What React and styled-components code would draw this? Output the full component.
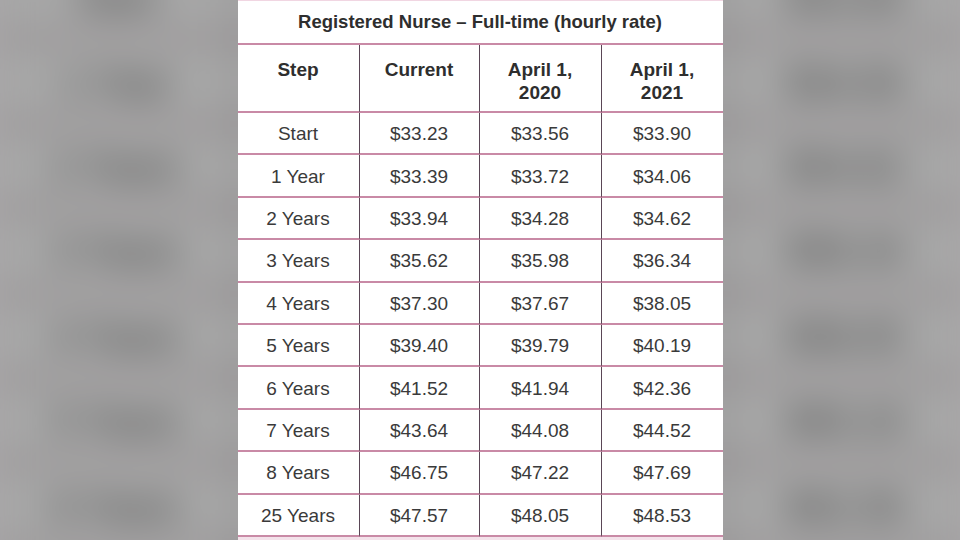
import styled, { createGlobalStyle } from 'styled-components';

const GlobalStyle = createGlobalStyle`
  html, body {
    margin: 0;
    padding: 0;
    background: #a9a6a8;
  }
  body {
    font-family: "Liberation Sans", Arial, sans-serif;
  }
`;

const Stage = styled.div`
  width: 960px;
  height: 540px;
  overflow: hidden;
  display: grid;
  place-items: start center;
  background: #a9a6a8;
`;

const Layer = styled.div`
  grid-area: 1 / 1;
`;

// blurred, enlarged copy of the table behind the sharp one
const Backdrop = styled(Layer)`
  transform: scale(2);
  transform-origin: 50% 270px;
  filter: blur(9px) grayscale(0.6) brightness(0.67) contrast(0.9);
`;

const Front = styled(Layer)`
  position: relative;
  z-index: 1;
`;

const Card = styled.div`
  width: 485px;
  height: 540px;
  background: #fff;
  color: #3a3a3a;
  box-shadow: inset 0 -5px 0 #f3e2ea;
`;

const Title = styled.div`
  height: 42px;
  display: flex;
  align-items: center;
  justify-content: center;
  border-top: 1px solid #f1d6e2;
  border-bottom: 2px solid #c98aa6;
  font-size: 18.5px;
  font-weight: 700;
  color: #2e2e2e;
`;

const Grid = styled.div`
  display: grid;
  grid-template-columns: 121px 120px 122px 122px;
  grid-template-rows: 68px repeat(10, 42.4px);
`;

const Cell = styled.div`
  display: flex;
  justify-content: center;
  align-items: ${(p) => (p.$head ? 'flex-start' : 'center')};
  padding-top: ${(p) => (p.$head ? '13px' : '1px')};
  text-align: center;
  line-height: 23px;
  font-size: 19px;
  font-weight: ${(p) => (p.$head ? 700 : 400)};
  color: ${(p) => (p.$head ? '#2e2e2e' : '#3a3a3a')};
  border-bottom: 2px solid #c98aa6;
  border-left: ${(p) => (p.$first ? 'none' : '1.5px solid #5a4656')};
  box-sizing: border-box;
`;

const HeadText = styled.span`
  white-space: pre-line;
`;

const columns = ['Step', 'Current', 'April 1,\n2020', 'April 1,\n2021'];

const rows = [
  ['Start', '$33.23', '$33.56', '$33.90'],
  ['1 Year', '$33.39', '$33.72', '$34.06'],
  ['2 Years', '$33.94', '$34.28', '$34.62'],
  ['3 Years', '$35.62', '$35.98', '$36.34'],
  ['4 Years', '$37.30', '$37.67', '$38.05'],
  ['5 Years', '$39.40', '$39.79', '$40.19'],
  ['6 Years', '$41.52', '$41.94', '$42.36'],
  ['7 Years', '$43.64', '$44.08', '$44.52'],
  ['8 Years', '$46.75', '$47.22', '$47.69'],
  ['25 Years', '$47.57', '$48.05', '$48.53'],
];

function RateTable() {
  return (
    <Card>
      <Title>Registered Nurse – Full-time (hourly rate)</Title>
      <Grid>
        {columns.map((c, i) => (
          <Cell key={c} $head $first={i === 0}>
            <HeadText>{c}</HeadText>
          </Cell>
        ))}
        {rows.map((r) =>
          r.map((v, i) => (
            <Cell key={r[0] + i} $first={i === 0}>
              {v}
            </Cell>
          ))
        )}
      </Grid>
    </Card>
  );
}

export default function App() {
  return (
    <>
      <GlobalStyle />
      <Stage>
        <Backdrop aria-hidden="true">
          <RateTable />
        </Backdrop>
        <Front>
          <RateTable />
        </Front>
      </Stage>
    </>
  );
}
